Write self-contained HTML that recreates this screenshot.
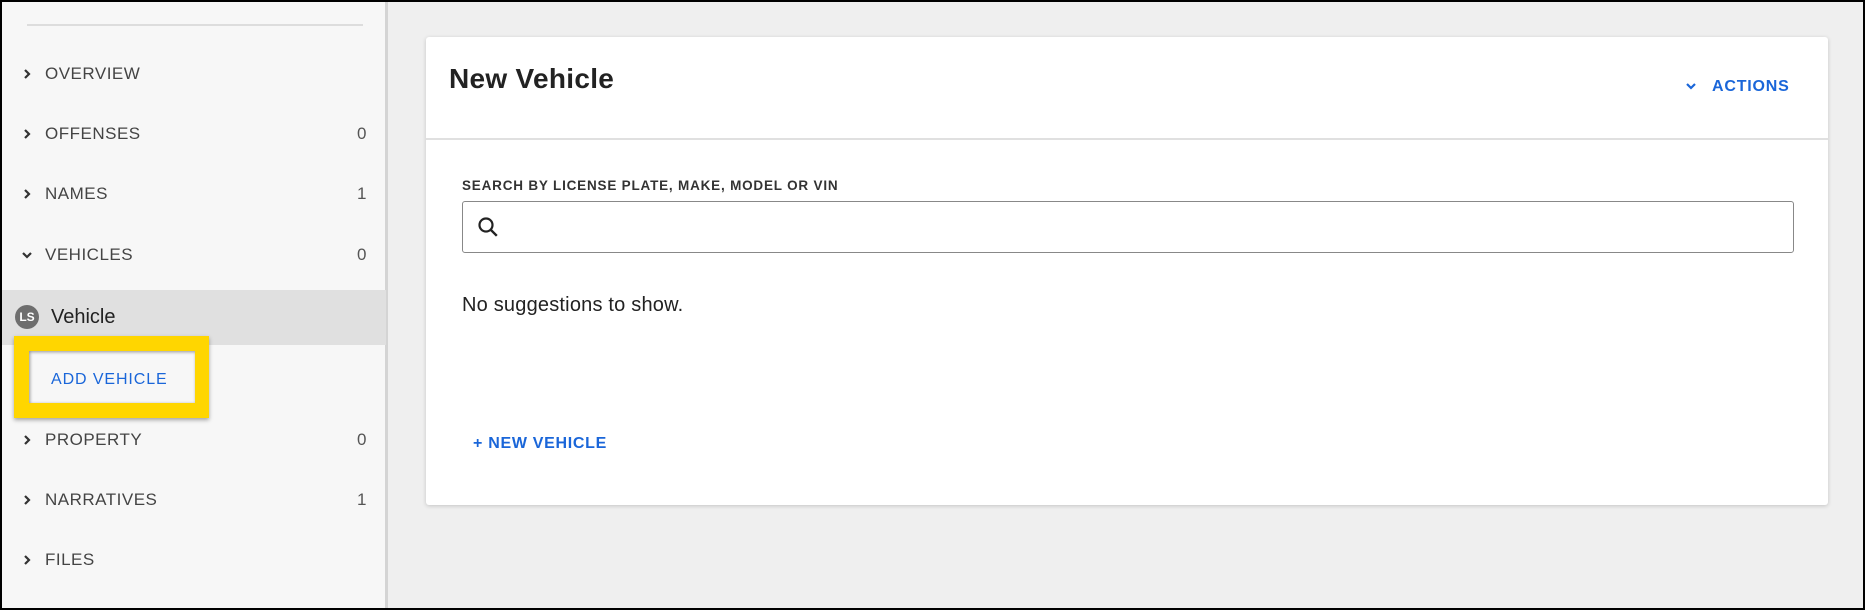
<!DOCTYPE html>
<html><head><meta charset="utf-8"><style>
*{margin:0;padding:0;box-sizing:border-box}
body{width:1865px;height:610px;overflow:hidden;background:#000;font-family:"Liberation Sans",sans-serif;position:relative}
#frame{position:absolute;left:2px;top:2px;width:1861px;height:606px;background:#efefef;overflow:hidden}
#side{position:absolute;left:0;top:0;width:386px;height:606px;background:#f7f7f7;border-right:3px solid #d4d4d4}
.t{position:absolute;white-space:nowrap}
.nav{position:absolute;left:0;width:384px;height:30px;font-size:17px;color:#444;letter-spacing:.5px;line-height:30px}
.nav .lab{position:absolute;left:43px}
.nav .cnt{position:absolute;right:19px;color:#555}
.nav svg{position:absolute;left:18px;top:8px}
#card{position:absolute;left:424px;top:35px;width:1402px;height:468px;background:#fff;border-radius:3px;box-shadow:0 1px 4px rgba(0,0,0,.18)}
</style></head><body><div id="frame">
<div id="side">
 <div style="position:absolute;left:25px;top:22px;width:336px;height:2px;background:#ddd"></div>
 <div class="nav" style="top:57px"><svg width="14" height="14" viewBox="0 0 14 14"><path d="M5 3l4 4-4 4" fill="none" stroke="#333" stroke-width="2.2"/></svg><span class="lab">OVERVIEW</span></div>
 <div class="nav" style="top:117px"><svg width="14" height="14" viewBox="0 0 14 14"><path d="M5 3l4 4-4 4" fill="none" stroke="#333" stroke-width="2.2"/></svg><span class="lab">OFFENSES</span><span class="cnt">0</span></div>
 <div class="nav" style="top:177px"><svg width="14" height="14" viewBox="0 0 14 14"><path d="M5 3l4 4-4 4" fill="none" stroke="#333" stroke-width="2.2"/></svg><span class="lab">NAMES</span><span class="cnt">1</span></div>
 <div class="nav" style="top:238px"><svg width="14" height="14" viewBox="0 0 14 14"><path d="M3 5l4 4 4-4" fill="none" stroke="#333" stroke-width="2.2"/></svg><span class="lab">VEHICLES</span><span class="cnt">0</span></div>
 <div style="position:absolute;left:0;top:288px;width:384px;height:55px;background:#e0e0e0"></div>
 <div style="position:absolute;left:13px;top:303px;width:24px;height:24px;border-radius:50%;background:#6e6e6e;color:#fff;font-size:12px;line-height:24px;text-align:center;font-weight:bold">LS</div>
 <div class="t" style="left:49px;top:302px;font-size:20px;color:#222;line-height:26px">Vehicle</div>
 <div style="position:absolute;left:12px;top:334px;width:195px;height:82px;background:#ffd600;box-shadow:0 2px 4px rgba(0,0,0,.35)"></div>
 <div style="position:absolute;left:27px;top:349px;width:166px;height:52px;background:#f7f7f7;box-shadow:inset 1px 1px 3px rgba(0,0,0,.4)"></div>
 <div class="t" style="left:49px;top:367px;font-size:16px;color:#1a66d9;letter-spacing:.9px;line-height:22px">ADD VEHICLE</div>
 <div class="nav" style="top:423px"><svg width="14" height="14" viewBox="0 0 14 14"><path d="M5 3l4 4-4 4" fill="none" stroke="#333" stroke-width="2.2"/></svg><span class="lab">PROPERTY</span><span class="cnt">0</span></div>
 <div class="nav" style="top:483px"><svg width="14" height="14" viewBox="0 0 14 14"><path d="M5 3l4 4-4 4" fill="none" stroke="#333" stroke-width="2.2"/></svg><span class="lab">NARRATIVES</span><span class="cnt">1</span></div>
 <div class="nav" style="top:543px"><svg width="14" height="14" viewBox="0 0 14 14"><path d="M5 3l4 4-4 4" fill="none" stroke="#333" stroke-width="2.2"/></svg><span class="lab">FILES</span></div>
</div>
<div id="card">
 <div class="t" style="left:23px;top:24px;font-size:28px;font-weight:bold;color:#222;line-height:36px;letter-spacing:.3px">New Vehicle</div>
 <svg style="position:absolute;left:1258px;top:42px" width="14" height="14" viewBox="0 0 14 14"><path d="M3 5l4 4 4-4" fill="none" stroke="#1a66d9" stroke-width="2.2"/></svg>
 <div class="t" style="left:1286px;top:39px;font-size:16px;font-weight:bold;color:#1a66d9;letter-spacing:.8px;line-height:22px">ACTIONS</div>
 <div style="position:absolute;left:0;top:101px;width:1402px;height:2px;background:#e0e0e0"></div>
 <div class="t" style="left:36px;top:141px;font-size:13.5px;font-weight:bold;color:#333;letter-spacing:.8px;line-height:16px">SEARCH BY LICENSE PLATE, MAKE, MODEL OR VIN</div>
 <div style="position:absolute;left:36px;top:164px;width:1332px;height:52px;border:1.5px solid #888;border-radius:3px"></div>
 <svg style="position:absolute;left:50px;top:178px" width="26" height="26" viewBox="0 0 26 26"><circle cx="10" cy="10" r="6.5" fill="none" stroke="#222" stroke-width="2.2"/><path d="M14.8 14.8l6 6" stroke="#222" stroke-width="2.4"/></svg>
 <div class="t" style="left:36px;top:256px;font-size:20px;color:#222;line-height:24px;letter-spacing:.2px">No suggestions to show.</div>
 <div class="t" style="left:47px;top:396px;font-size:16px;font-weight:bold;color:#1a66d9;letter-spacing:.7px;line-height:22px">+ NEW VEHICLE</div>
</div>
</div></body></html>
